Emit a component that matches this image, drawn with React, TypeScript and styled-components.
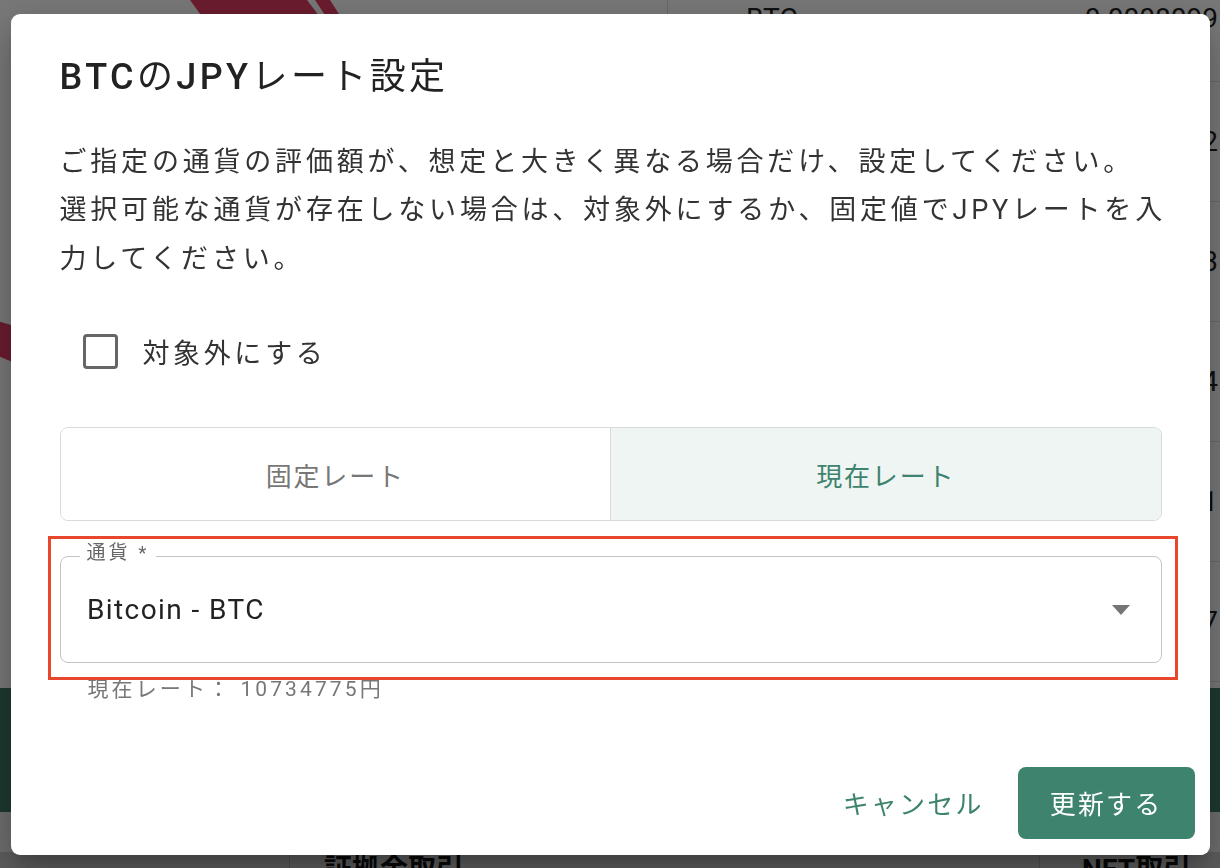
import styled, { createGlobalStyle } from "styled-components";

const GlobalStyle = createGlobalStyle`
  * {
    box-sizing: border-box;
  }
  html,
  body {
    margin: 0;
    height: 100%;
    overflow: hidden;
  }
  body {
    font-family: Roboto, "Noto Sans CJK JP", "Noto Sans", sans-serif;
    color: #222;
    background: #fff;
    -webkit-font-smoothing: antialiased;
  }
`;

const green = "#3d836d";

/* ---------- page under the dialog ---------- */

const Page = styled.div`
  width: 1220px;
  height: 868px;
  display: grid;
  grid-template-columns: 667px 1fr;
  grid-template-rows: 688px 124px 1fr;
  background: #fff;
`;

const Hero = styled.section`
  overflow: hidden;
`;

const Holdings = styled.section`
  border-left: 1px solid #dedede;
  display: flex;
  flex-direction: column;
  overflow: hidden;
`;

const HoldingRow = styled.div<{ $height: number; $top?: boolean }>`
  height: ${({ $height }) => $height}px;
  flex-shrink: 0;
  display: flex;
  align-items: ${({ $top }) => ($top ? "flex-start" : "center")};
  justify-content: space-between;
  padding: ${({ $top }) => ($top ? "2px" : "0")} 2px 0 78px;
  border-bottom: 1px solid #e0e0e0;
  font-size: 28px;
  white-space: nowrap;
`;

const Band = styled.div`
  grid-column: 1 / -1;
  background: #3c7b68;
`;

const Footer = styled.div`
  grid-column: 1 / -1;
  display: flex;
  flex-direction: column;
  background: #eaeaea;
`;

const FooterHead = styled.div`
  margin-top: 40px;
  flex: 1;
  display: grid;
  grid-template-columns: 290px 750px 1fr;
  background: #c6c6c6;
`;

const FooterCell = styled.div`
  padding: 0 0 0 34px;
  border-right: 1px solid #aaa;
  font-size: 28px;
  font-weight: 700;
  line-height: 36px;
  color: #111;

  &:last-child {
    padding-left: 42px;
    border-right: none;
  }
`;

/* ---------- dialog ---------- */

const Backdrop = styled.div`
  position: fixed;
  inset: 0;
  background: rgba(0, 0, 0, 0.53);
  display: flex;
  align-items: center;
  justify-content: center;
`;

const Dialog = styled.div`
  width: 1199px;
  height: 841px;
  background: #fff;
  border-radius: 9px;
  box-shadow: 0 11px 15px -7px rgba(0, 0, 0, 0.2),
    0 24px 38px 3px rgba(0, 0, 0, 0.14), 0 9px 46px 8px rgba(0, 0, 0, 0.12);
  display: flex;
  flex-direction: column;
`;

const Title = styled.h2`
  margin: 0;
  padding: 38px 48px 0 49px;
  font-size: 36px;
  line-height: 50px;
  font-weight: 400;
  letter-spacing: 3.4px;
  color: #222;
`;

const Latin = styled.span`
  font-weight: 500;
`;

const Content = styled.div`
  padding: 0 48px 0 49px;
  display: flex;
  flex-direction: column;
`;

const Lead = styled.p`
  margin: 36px 0 0;
  font-size: 27px;
  line-height: 48.5px;
  letter-spacing: 3.8px;
  color: #333;
  white-space: nowrap;
`;

const CheckRow = styled.label`
  margin-top: 43px;
  height: 50px;
  display: flex;
  align-items: center;
  gap: 25px;
  padding-left: 23px;
  font-size: 27px;
  letter-spacing: 3.6px;
  color: #333;
`;

const CheckBox = styled.span`
  width: 35px;
  height: 35px;
  border: 3px solid #666;
  border-radius: 4px;
`;

const Toggle = styled.div`
  margin-top: 51px;
  height: 94px;
  display: flex;
  border: 1.5px solid #dadada;
  border-radius: 8px;
  overflow: hidden;
`;

const ToggleOption = styled.button<{ $active?: boolean }>`
  flex: 1;
  border: none;
  padding: 0;
  font: inherit;
  font-size: 26px;
  letter-spacing: 1.8px;
  color: ${({ $active }) => ($active ? green : "#777")};
  background: ${({ $active }) => ($active ? "#eff5f3" : "#fff")};

  & + & {
    border-left: 1.5px solid #dadada;
  }
`;

const FieldArea = styled.div`
  position: relative;
  margin-top: 35px;
`;

const Highlight = styled.div`
  position: absolute;
  top: -20px;
  left: -12px;
  right: -16px;
  bottom: -17px;
  border: 3px solid #e9472b;
  pointer-events: none;
`;

const SelectBox = styled.div`
  position: relative;
  height: 107px;
  display: flex;
  align-items: center;
  justify-content: space-between;
  padding: 0 31px 0 26.5px;
  border: 1.5px solid #c4c4c4;
  border-radius: 8px;
`;

const Legend = styled.span`
  position: absolute;
  top: -15px;
  left: 19px;
  padding: 0 7px;
  background: #fff;
  font-size: 19px;
  line-height: 22px;
  letter-spacing: 3px;
  color: #666;
`;

const SelectValue = styled.span`
  font-size: 28px;
  letter-spacing: 1.4px;
  color: #222;
`;

const Helper = styled.p`
  margin: 14px 0 0;
  padding-left: 28px;
  font-size: 21px;
  line-height: 24px;
  letter-spacing: 3.1px;
  color: #777;
`;

const Actions = styled.div`
  margin-top: auto;
  padding: 0 15px 16px;
  display: flex;
  justify-content: flex-end;
  align-items: center;
  gap: 20px;
`;

const ActionButton = styled.button<{ $primary?: boolean }>`
  height: 72px;
  padding: 0 ${({ $primary }) => ($primary ? "32px" : "14px")};
  border: none;
  border-radius: 8px;
  font: inherit;
  font-size: 26px;
  letter-spacing: 2.2px;
  color: ${({ $primary }) => ($primary ? "#fff" : green)};
  background: ${({ $primary }) => ($primary ? green : "transparent")};
`;

function ArrowDown() {
  return (
    <svg width="18" height="10" viewBox="0 0 18 10">
      <polygon points="0,0 18,0 9,10" fill="#757575" />
    </svg>
  );
}

function Logo() {
  return (
    <svg width="667" height="688" viewBox="0 0 667 688">
      <path d="M190 0 L307 0 L345 50 L226 50 Z" fill="#e43c64" />
      <path d="M315 0 L330 0 L362 50 L348 50 Z" fill="#e43c64" />
      <path d="M-20 318 Q40 326 80 372 L40 382 Q12 356 -20 352 Z" fill="#e43c64" />
    </svg>
  );
}

// only the first row's name peeks out above the dialog
const holdings = [
  { name: "BTC", value: "0.0008099", height: 82, top: true },
  { name: "", value: "0.0152", height: 120 },
  { name: "", value: "12.43", height: 120 },
  { name: "", value: "0.2254", height: 120 },
  { name: "", value: "0.0121", height: 120 },
  { name: "", value: "4,567", height: 120 },
];

export default function App() {
  return (
    <>
      <GlobalStyle />
      <Page>
        <Hero>
          <Logo />
        </Hero>
        <Holdings>
          {holdings.map((h) => (
            <HoldingRow key={h.value} $height={h.height} $top={h.top}>
              <span>{h.name}</span>
              <span>{h.value}</span>
            </HoldingRow>
          ))}
        </Holdings>
        <Band />
        <Footer>
          <FooterHead>
            <FooterCell />
            <FooterCell>証拠金取引</FooterCell>
            <FooterCell>NET取引</FooterCell>
          </FooterHead>
        </Footer>
      </Page>

      <Backdrop>
        <Dialog role="dialog">
          <Title>
            <Latin>BTC</Latin>の<Latin>JPY</Latin>レート設定
          </Title>
          <Content>
            <Lead>
              ご指定の通貨の評価額が、想定と大きく異なる場合だけ、設定してください。
              <br />
              選択可能な通貨が存在しない場合は、対象外にするか、固定値でJPYレートを入
              <br />
              力してください。
            </Lead>
            <CheckRow>
              <CheckBox />
              対象外にする
            </CheckRow>
            <Toggle>
              <ToggleOption>固定レート</ToggleOption>
              <ToggleOption $active>現在レート</ToggleOption>
            </Toggle>
            <FieldArea>
              <SelectBox>
                <Legend>通貨 *</Legend>
                <SelectValue>Bitcoin - BTC</SelectValue>
                <ArrowDown />
              </SelectBox>
              <Highlight />
            </FieldArea>
            <Helper>現在レート： 10734775円</Helper>
          </Content>
          <Actions>
            <ActionButton>キャンセル</ActionButton>
            <ActionButton $primary>更新する</ActionButton>
          </Actions>
        </Dialog>
      </Backdrop>
    </>
  );
}
